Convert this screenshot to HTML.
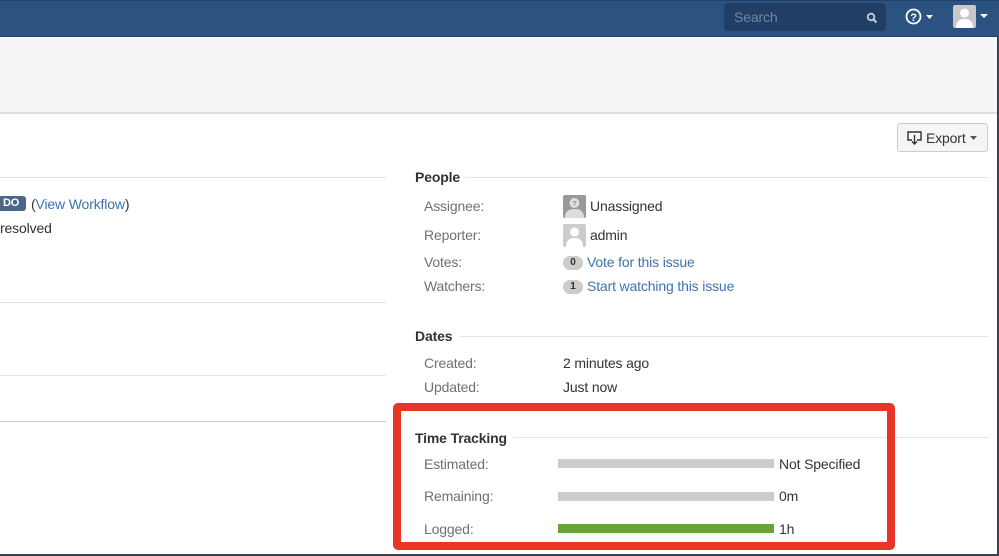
<!DOCTYPE html>
<html><head><meta charset="utf-8"><style>
*{margin:0;padding:0;box-sizing:border-box}
body{width:999px;height:556px;overflow:hidden;background:#fff;font-family:"Liberation Sans",Arial,sans-serif;font-size:14px;color:#333;position:relative;letter-spacing:-0.15px}
.abs{position:absolute}
.hdr{left:0;top:0;width:999px;height:37px;background:#2b5281;border-top:1px solid #22406a;border-bottom:1px solid #22406a}
.sub{left:0;top:37px;width:999px;height:77px;background:#f5f5f5;border-bottom:2px solid #ddd}
.lbl{color:#707070}
.lnk{color:#3b73af}
.hr{height:1px;background:#e4e4e4}
.badge{display:inline-block;background:#ccc;color:#333;font-size:10px;font-weight:bold;border-radius:8px;width:20px;height:14px;line-height:14px;text-align:center;letter-spacing:0}
.bar{height:9px;background:#ccc}
h4{font-size:14px;font-weight:bold;color:#333}
</style></head><body>
<div class="abs hdr"></div>
<div class="abs" style="left:724px;top:3px;width:162px;height:28px;background:#213f66;border-radius:4px"></div>
<div class="abs" style="left:734px;top:9px;color:#6f87a6;font-size:14px">Search</div>
<svg class="abs" style="left:866px;top:12px" width="12" height="12" viewBox="0 0 12 12"><circle cx="5" cy="5" r="3.3" stroke="#c5d0de" stroke-width="1.8" fill="none"/><path d="M7.5 7.5L10.5 10.5" stroke="#c5d0de" stroke-width="2"/></svg>
<svg class="abs" style="left:905px;top:8px" width="30" height="18" viewBox="0 0 30 18"><circle cx="8.5" cy="8.5" r="7" stroke="#fff" stroke-width="1.8" fill="none"/><text x="8.5" y="13" font-size="11" font-weight="bold" fill="#fff" text-anchor="middle" font-family="Liberation Sans">?</text><path d="M21 7h7l-3.5 4z" fill="#fff"/></svg>
<div class="abs" style="left:953px;top:5px;width:23px;height:23px;background:#c8c8c8;border-radius:2px;overflow:hidden"><svg width="23" height="23" viewBox="0 0 23 23"><circle cx="11.5" cy="8" r="4.5" fill="#fff"/><path d="M3 23c0-7 4-9 8.5-9s8.5 2 8.5 9z" fill="#fff"/></svg></div>
<svg class="abs" style="left:980px;top:14px" width="8" height="5"><path d="M0 0h8l-4 4z" fill="#fff"/></svg>
<div class="abs sub"></div>
<div class="abs" style="left:897px;top:123px;width:91px;height:29px;background:#f5f5f5;border:1px solid #ccc;border-radius:3px"></div>
<svg class="abs" style="left:907px;top:131px" width="15" height="14" viewBox="0 0 15 14"><path d="M5 9H1V1h13v8h-4" stroke="#333" stroke-width="1.4" fill="none"/><path d="M7.5 4v9M5 10.5l2.5 2.5 2.5-2.5" stroke="#333" stroke-width="1.4" fill="none"/></svg>
<div class="abs" style="left:926px;top:130px;font-size:14px">Export</div>
<svg class="abs" style="left:970px;top:136px" width="7" height="4"><path d="M0 0h7l-3.5 4z" fill="#555"/></svg>

<div class="abs hr" style="left:0;top:177px;width:386px"></div>
<div class="abs" style="left:0;top:196px;width:26px;height:15px;background:#4a6785;border-radius:0 3px 3px 0;color:#fff;font-size:11px;font-weight:bold;line-height:15px;padding-left:3px">DO</div>
<div class="abs" style="left:31px;top:196px">(<span class="lnk">View Workflow</span>)</div>
<div class="abs" style="left:0;top:220px">resolved</div>
<div class="abs hr" style="left:0;top:302px;width:386px"></div>
<div class="abs hr" style="left:0;top:375px;width:386px"></div>
<div class="abs hr" style="left:0;top:421px;width:386px;background:#ccc"></div>

<h4 class="abs" style="left:415px;top:169px">People</h4>
<div class="abs hr" style="left:465px;top:177px;width:523px"></div>
<div class="abs lbl" style="left:424px;top:198px">Assignee:</div>
<div class="abs" style="left:563px;top:195px;width:23px;height:23px;background:#999;border-radius:2px;overflow:hidden"><svg width="23" height="23"><circle cx="11.5" cy="8" r="5" fill="#ddd"/><path d="M2 23c0-7 4-9 9.5-9s9.5 2 9.5 9z" fill="#ddd"/><text x="11.5" y="11" font-size="7" text-anchor="middle" fill="#777">?</text></svg></div>
<div class="abs" style="left:590px;top:198px">Unassigned</div>
<div class="abs lbl" style="left:424px;top:227px">Reporter:</div>
<div class="abs" style="left:563px;top:224px;width:23px;height:23px;background:#ccc;border-radius:2px;overflow:hidden"><svg width="23" height="23"><circle cx="11.5" cy="8" r="4.5" fill="#fff"/><path d="M3 23c0-7 4-9 8.5-9s8.5 2 8.5 9z" fill="#fff"/></svg></div>
<div class="abs" style="left:590px;top:227px">admin</div>
<div class="abs lbl" style="left:424px;top:254px">Votes:</div>
<div class="abs badge" style="left:563px;top:256px">0</div>
<div class="abs lnk" style="left:587px;top:254px">Vote for this issue</div>
<div class="abs lbl" style="left:424px;top:278px">Watchers:</div>
<div class="abs badge" style="left:563px;top:280px">1</div>
<div class="abs lnk" style="left:587px;top:278px">Start watching this issue</div>

<h4 class="abs" style="left:415px;top:328px">Dates</h4>
<div class="abs hr" style="left:460px;top:336px;width:528px"></div>
<div class="abs lbl" style="left:424px;top:355px">Created:</div>
<div class="abs" style="left:563px;top:355px">2 minutes ago</div>
<div class="abs lbl" style="left:424px;top:379px">Updated:</div>
<div class="abs" style="left:563px;top:379px">Just now</div>

<h4 class="abs" style="left:415px;top:430px">Time Tracking</h4>
<div class="abs hr" style="left:513px;top:437px;width:475px"></div>
<div class="abs lbl" style="left:424px;top:456px">Estimated:</div>
<div class="abs bar" style="left:558px;top:459px;width:216px"></div>
<div class="abs" style="left:779px;top:456px">Not Specified</div>
<div class="abs lbl" style="left:424px;top:488px">Remaining:</div>
<div class="abs bar" style="left:558px;top:492px;width:216px"></div>
<div class="abs" style="left:779px;top:488px">0m</div>
<div class="abs lbl" style="left:424px;top:521px">Logged:</div>
<div class="abs bar" style="left:558px;top:524px;width:216px;background:#67a33b"></div>
<div class="abs" style="left:779px;top:521px">1h</div>

<div class="abs" style="left:393px;top:403px;width:502px;height:147px;border:8px solid #e93428;border-radius:5px"></div>
<div class="abs" style="left:997px;top:37px;width:2px;height:519px;background:#3a4250"></div>
<div class="abs" style="left:0;top:554px;width:999px;height:2px;background:#3a4250"></div>
</body></html>
